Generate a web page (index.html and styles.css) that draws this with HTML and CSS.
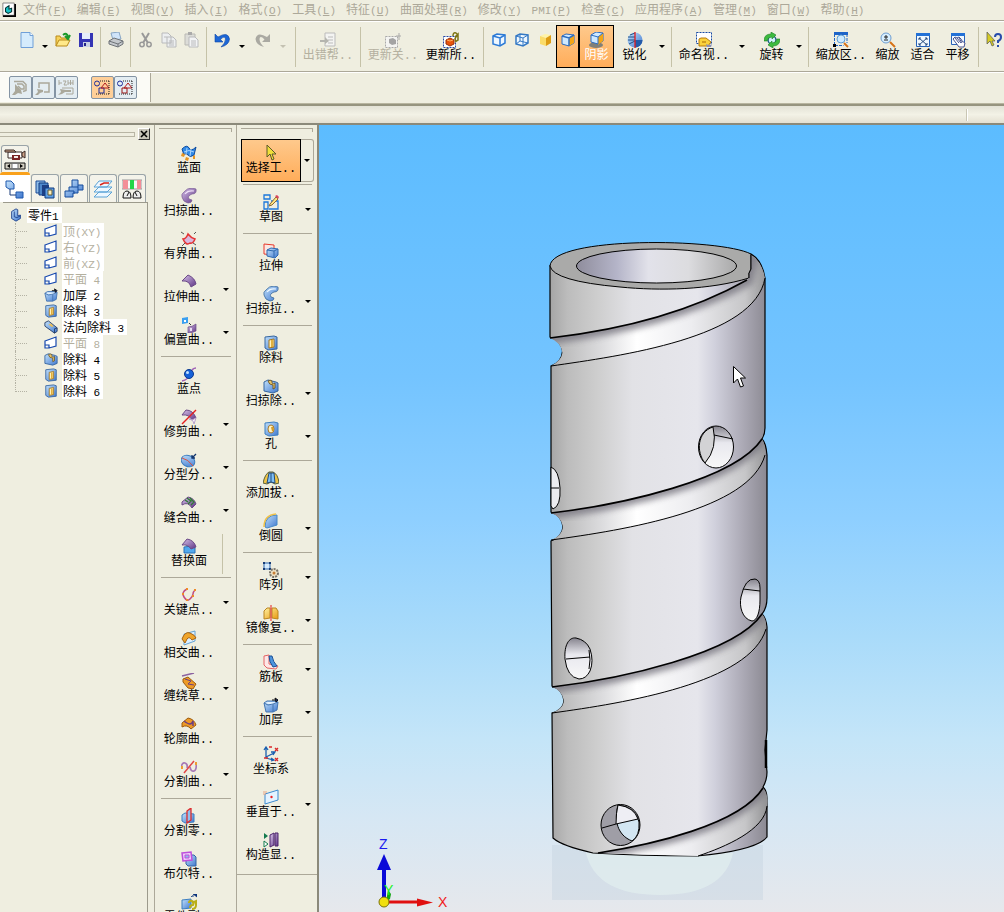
FILE: index.html
```html
<!DOCTYPE html>
<html lang="zh-CN">
<head>
    <meta charset="utf-8">
    <title>零件1</title>
    <link rel="stylesheet" href="styles.css">
</head>
<body>
    <svg class="sprite" aria-hidden="true">
        <defs>
            <linearGradient id="gBlue" x1="0" y1="0" x2="1" y2="1"><stop offset="0" stop-color="#c4e2fb"/><stop offset="1" stop-color="#3f78cf"/></linearGradient>
            <linearGradient id="gPurple" x1="0" y1="0" x2="1" y2="1"><stop offset="0" stop-color="#d9c4ea"/><stop offset="1" stop-color="#5d3384"/></linearGradient>
            <linearGradient id="gGold" x1="0" y1="0" x2="1" y2="1"><stop offset="0" stop-color="#fff0a0"/><stop offset="1" stop-color="#e79a10"/></linearGradient>
        </defs>
        <symbol id="new" viewBox="0 0 16 16"><path d="M2 .5h9l3 3v12H2z" fill="#d5ebfc" stroke="#6f9fd8"/><path d="M11 .5v3h3" fill="#fff" stroke="#6f9fd8"/></symbol>
        <symbol id="open" viewBox="0 0 16 16"><path d="M1 14V4h4l1 2h6v2" fill="#f6d25a" stroke="#b98a1a"/><path d="M1 14l3-6h11l-3 6z" fill="#ffe98a" stroke="#b98a1a"/><path d="M8 3q4-3 5 2M10 4l3 3 2-4" fill="none" stroke="#1a9a2a" stroke-width="2"/></symbol>
        <symbol id="save" viewBox="0 0 16 16"><path d="M1 1h14v14H1z" fill="#3434b4"/><path d="M4 1h8v6H4z" fill="#e6eefa"/><path d="M5 10h7v5H5z" fill="#c8d0e4"/><path d="M6 11h2v3H6z" fill="#22228a"/></symbol>
        <symbol id="print" viewBox="0 0 16 16"><path d="M3 1l8-1 2 7-8 1z" fill="#cfe4fa" stroke="#88a6c4"/><path d="M1 9l5-3 9 3v3l-5 3-9-3z" fill="#c4c8cc" stroke="#6e7378"/><path d="M1 9l9 3 5-3M10 12v3" fill="none" stroke="#6e7378"/></symbol>
        <symbol id="cut" viewBox="0 0 16 16"><path d="M4 1l6 10M11 1L5 11" stroke="#999" stroke-width="2"/><circle cx="4" cy="12.500" r="2.200" fill="none" stroke="#999" stroke-width="1.500"/><circle cx="11" cy="12.500" r="2.200" fill="none" stroke="#999" stroke-width="1.500"/></symbol>
        <symbol id="copy" viewBox="0 0 16 16"><path d="M1 1h6l3 3v7H1zM6 5h6l3 3v7H6z" fill="#eceef0" stroke="#b9babc"/><path d="M8 9h5M8 11h5M8 13h5M3 5h3" stroke="#b9babc"/></symbol>
        <symbol id="paste" viewBox="0 0 16 16"><path d="M1 2h10v11H1z" fill="#dcdcd8" stroke="#b9b9b4"/><path d="M4 0h4v3H4z" fill="#aaa"/><path d="M5 5h6l3 3v7H5z" fill="#f2f3f5" stroke="#b9babc"/><path d="M7 9h5M7 11h5M7 13h5" stroke="#b9babc"/></symbol>
        <symbol id="undo" viewBox="0 0 16 16"><path d="M1 2v8h8L6.500 7.500Q11 3 11.500 7q0 4-4.500 8 8-2 8.500-8Q14-1 4 5z" fill="#1c66d6" stroke="#0d46a5" stroke-width=".6"/></symbol>
        <symbol id="redo" viewBox="0 0 16 16"><path d="M15 2v8H7l2.500-2.500Q5 3 4.500 7q0 4 4.500 8-8-2-8.500-8Q2-1 12 5z" fill="#aaa9a2"/></symbol>
        <symbol id="err" viewBox="0 0 16 16"><path d="M5 1h10v13H5z" fill="#f4f4f2" stroke="#bbb"/><path d="M8 5h5M8 8h5M8 11h5" stroke="#bbb"/><path d="M0 8h5V5l4 4-4 3v-2H0z" fill="#b5b5af"/></symbol>
        <symbol id="upd" viewBox="0 0 16 16"><path d="M.5 4.500h12v11H.5z" fill="#f4f4f2" stroke="#aaa" stroke-dasharray="2 1"/><path d="M4 7l4-1 3 2v4l-4 1-3-2z" fill="#a4a4a4"/><path d="M11 4h5M14 1v7" stroke="#aaa"/></symbol>
        <symbol id="updall" viewBox="0 0 16 16"><path d="M.5 4.500h12v11H.5z" fill="#fff" stroke="#2749a5" stroke-dasharray="2 1"/><path d="M3 8l4-2 4 2v4l-4 2-4-2z" fill="#e8540c" stroke="#97300a"/><path d="M4 8l3 1 3-1" fill="none" stroke="#ffb060"/><path d="M10 4q0-4 3-3 3 2 0 4-2 2 0 4M12 5l3-3v6l-3 2" fill="none" stroke="#7d7413" stroke-width="1.500"/></symbol>
        <symbol id="wire" viewBox="0 0 16 16"><path d="M2 4l4-2 8 1v8l-5 3-7-2z" fill="#eef7ff" stroke="#2c7ad6" stroke-width="1.500"/><path d="M2 4l7 2 5-3M9 6v8" fill="none" stroke="#2c7ad6" stroke-width="1.500"/></symbol>
        <symbol id="hidden" viewBox="0 0 16 16"><path d="M2 4l4-2 8 1v8l-5 3-7-2z" fill="#eef7ff" stroke="#3478c4" stroke-width="1.500"/><path d="M2 4l7 2 5-3M9 6v8M6 2v7l8 2M6 9l-4 3" fill="none" stroke="#3478c4"/></symbol>
        <symbol id="solid" viewBox="0 0 16 16"><path d="M3 4l5-2 6 1-5 3z" fill="#fff3a8"/><path d="M3 4l6 2v8l-6-2z" fill="#fbdc69"/><path d="M9 6l5-3v8l-5 3z" fill="#dd9c13"/></symbol>
        <symbol id="edges" viewBox="0 0 16 16"><path d="M2 4l4-2 8 1v8l-5 3-7-2z" fill="#cfe9ff" stroke="#2c6cc0"/><path d="M9 6l5-3v8l-5 3z" fill="#f3a516"/><path d="M2 4l7 2 5-3M9 6v8" fill="none" stroke="#2c6cc0" stroke-width="1.500"/></symbol>
        <symbol id="shade" viewBox="0 0 16 16"><ellipse cx="7" cy="13" rx="7" ry="3" fill="#80807a"/><path d="M2 3l5-3 7 1v8l-5 3-7-2z" fill="#cfe9ff" stroke="#2c6cc0"/><path d="M9 5l5-4v8l-5 4z" fill="#f3a516"/><path d="M2 3l7 2 5-4M9 5v7" fill="none" stroke="#2c6cc0"/></symbol>
        <symbol id="sharp" viewBox="0 0 16 16"><circle cx="8" cy="8" r="7.500" fill="url(#gBlue)"/><path d="M1 5h7M1 8h7M2 12l6-3M8 1L3 3" stroke="#215085"/><path d="M8 8h7.500A7.500 7.500 0 0 1 8 15.500z" fill="#245baa"/><path d="M8 0v16" stroke="#e61d1d" stroke-width="1.300"/></symbol>
        <symbol id="named" viewBox="0 0 16 16"><path d="M.5.500h15v11H.5z" fill="#fff" stroke="#174aa5" stroke-dasharray="2 1"/><path d="M3 7l2-1h5l5 4-3 4H3z" fill="#fbd23c" stroke="#b87b0c"/><path d="M6 10h4" stroke="#a86804"/><path d="M10 12q4 2 6 0l-1 3h-4z" fill="#8790bc"/></symbol>
        <symbol id="rotate" viewBox="0 0 16 16"><circle cx="8" cy="8" r="4" fill="#d2f0fb" stroke="#1b5c80" stroke-width="1.500"/><path d="M0 9q0-7 7-7V0l5 3-4 4V5Q4 5 3 9zM16 7q0 7-7 7v2l-5-3 4-4v2q4 0 5-4z" fill="#3dba3f" stroke="#1d8222" stroke-width=".6"/></symbol>
        <symbol id="zarea" viewBox="0 0 16 16"><path d="M1.500 2v11.500h9M14 2v9" fill="none" stroke="#1d64c8" stroke-dasharray="3 1"/><path d="M1 0h14v3H1z" fill="#1d64c8"/><circle cx="8" cy="7" r="4" fill="#cdeaff" stroke="#5f9dd4"/><path d="M11 11l4 4" stroke="#d67217" stroke-width="2"/><path d="M0 12h3v3H0z"/></symbol>
        <symbol id="zoom" viewBox="0 0 16 16"><circle cx="6" cy="6" r="5" fill="#d8efff" stroke="#6d9cd0"/><path d="M4 5h4M6 3v4M4 8h4" stroke="#222"/><path d="M10 10l5 5" stroke="#d67217" stroke-width="2"/></symbol>
        <symbol id="fit" viewBox="0 0 16 16"><path d="M1.500 1.500h13v13h-13z" fill="#f0f8ff" stroke="#2762b8"/><path d="M1 1h14v3H1z" fill="#2371d6"/><path d="M4 6l8 7M12 6l-8 7" stroke="#24487d"/><path d="M4 8V6h2M10 6h2v2M12 11v2h-2M6 13H4v-2" fill="none" stroke="#24487d"/></symbol>
        <symbol id="pan" viewBox="0 0 16 16"><path d="M1.500 1.500h13v11h-13z" fill="#f0f8ff" stroke="#2762b8"/><path d="M1 1h14v3H1z" fill="#2371d6"/><path d="M3 7l2-2 2 1 2-1 2 2 1 2 3 2-1 4H9z" fill="#fff" stroke="#465390"/><path d="M5 6l4 5M7 6l4 5M9 6l3 5" stroke="#465390"/></symbol>
        <symbol id="help" viewBox="0 0 16 16"><path d="M1 0v12l3-3 2 5 2-1-2-4h3z" fill="#d6cc25" stroke="#555" stroke-width=".7"/><path d="M9 5q0-3 3-3t3 3-3 4v2M12 13v2" fill="none" stroke="#274cad" stroke-width="2"/></symbol>
        <symbol id="relA" viewBox="0 0 16 16"><path d="M2 1.500h9l3 3v6l-3 1M5 4h5l2 2v3H9L6 6" fill="none" stroke="#aaa89b" stroke-width="1.500"/><path d="M0 15l3-4V4l6 6 1 4-4-1-3 2z" fill="#aaa89b"/></symbol>
        <symbol id="relB" viewBox="0 0 16 16"><path d="M4 8V3h10v9H9" fill="none" stroke="#aaa89b" stroke-width="1.500"/><path d="M0 15l3-3-1-3 6 1v2l-3 1-2 2z" fill="#aaa89b"/></symbol>
        <symbol id="relC" viewBox="0 0 16 16"><path d="M1 0v5M1 3h3M5 1h3L6 5h3M10 0v5M12.500 0v5M15 0v5M10 3h5M4 8h11v6H8" fill="none" stroke="#aaa89b"/><path d="M0 15l3-3-1-3 6 1h5v2H7l-3 2z" fill="#aaa89b"/></symbol>
        <symbol id="snap1" viewBox="0 0 16 16"><circle cx="3" cy="3.500" r="2.500" fill="none" stroke="#1c2d9a"/><path d="M5 8h5v5H5z" fill="none" stroke="#1c2d9a"/><path d="M7 8l4-5 4 5z" fill="none" stroke="#b01c1c"/><path d="M6 1h9M15 1v14M15 14H1" fill="none" stroke="#222" stroke-dasharray="1 1"/></symbol>
        <symbol id="snap2" viewBox="0 0 16 16"><circle cx="3" cy="3.500" r="2.500" fill="none" stroke="#1c2d9a"/><path d="M5 8h5v5H5z" fill="none" stroke="#9a1414"/><path d="M7 8l4-5 4 5z" fill="none" stroke="#b01c1c"/><path d="M6 1h9M15 1v14M15 14H1" fill="none" stroke="#222" stroke-dasharray="1 1"/></symbol>
        <symbol id="camera" viewBox="0 0 22 22"><path d="M4 4h14v6H4z" fill="#fff" stroke="#3a2a26"/><path d="M1 2h9l2 2H1zM18 5l3-2v7l-3-2z" fill="#cfa287" stroke="#3a2a26"/><path d="M8 7h8v5H8z" fill="#7b2424"/><path d="M10 8h4v2h-4z" fill="#f3e9e4"/><path d="M1 15h20v6H1z" fill="#d4d0c4" stroke="#111"/><path d="M3 18l3-2v4zM19 18l-3-2v4z"/><path d="M8 15.500h6v5H8z" fill="#fff" stroke="#777"/></symbol>
        <symbol id="tTree" viewBox="0 0 20 20"><path d="M1 2h5l3 3v5H4L1 8zM11 13h7v6h-7z" fill="url(#gBlue)" stroke="#1e59ad"/><path d="M5 10v6h6" fill="none" stroke="#1a3c7a"/></symbol>
        <symbol id="tLib" viewBox="0 0 20 20"><path d="M1 2h9v12H1z" fill="#8ebce8" stroke="#1a4b96"/><path d="M4 4h9v12H4z" fill="#4e88cc" stroke="#123c80"/><path d="M7 6h7v11H7z" fill="#1d3f85"/><path d="M10 9h9v10h-9z" fill="#5f9fe4" stroke="#123c80"/><path d="M13 11h4v5h-4z" fill="#fff0b8" stroke="#5c5738"/></symbol>
        <symbol id="tFam" viewBox="0 0 20 20"><path d="M8 1h6v5h5v5h-5v3H9v4H1v-6h4V8h3z" fill="url(#gBlue)" stroke="#174c9c"/><path d="M8 8h6M5 12h5v3M14 6v5" fill="none" stroke="#174c9c"/></symbol>
        <symbol id="tLay" viewBox="0 0 20 20"><path d="M1 18l5-5h13l-5 5zM1 13l5-5h13l-5 5zM1 8l5-6h13l-5 6z" fill="#edf7ff" stroke="#5aa2d6"/><path d="M7 6l4-2h5" fill="none" stroke="#d8261c" stroke-width="1.500"/></symbol>
        <symbol id="tSens" viewBox="0 0 20 20"><path d="M0 1h20v9H0z" fill="#f7f7f7" stroke="#999"/><path d="M1 1h5v9H1zM15 1h4v9h-4z" fill="#f38e98"/><path d="M8 1h4v9H8z" fill="#24d548"/><path d="M1 19q0-7 4-7t4 7zM11 19q0-7 4-7t4 7z" fill="#eee" stroke="#111"/><path d="M5 17l2-4M15 17l-2-4" stroke="#111"/></symbol>
        <symbol id="part" viewBox="0 0 14 16"><path d="M2 4l5-3 2 1v7l3-1v4l-5 3-5-3z" fill="url(#gBlue)" stroke="#1c3f8a"/><path d="M5 4v6l3 1 4-2" fill="none" stroke="#1c3f8a"/></symbol>
        <symbol id="plane" viewBox="0 0 14 14"><path d="M1 5l11-4v9l-7 2H1zM5 12v-3H1" fill="#fff" stroke="#1648ae" stroke-width="1.200"/></symbol>
        <symbol id="thick" viewBox="0 0 16 16"><path d="M1 6l3-2h8l3 1-1 8-4 2H3z" fill="url(#gBlue)" stroke="#4374b0"/><path d="M2 6l3-1h7l1 1-4 2z" fill="#e4f2ff"/><path d="M1 6l4 2 5-1 5-2M10 7v8" fill="none" stroke="#4374b0"/><path d="M9 3h4M12 1l3 2-2 2z" stroke="#111" fill="#122b78"/></symbol>
        <symbol id="cutout" viewBox="0 0 16 16"><path d="M2 2l9-1 3 1v12l-9 1-3-2z" fill="url(#gBlue)" stroke="#37669f"/><path d="M6 5l5-1v8l-5 1z" fill="#fff1ba" stroke="#a8781c"/><path d="M9 5v7" stroke="#d69b18" stroke-width="1.500"/></symbol>
        <symbol id="normcut" viewBox="0 0 16 16"><path d="M1 3l4-2 10 8v4l-3 2L1 7z" fill="url(#gBlue)" stroke="#253c62"/><path d="M5 5l3-1 3 3-2 1z" fill="#e9be5a"/><path d="M12 15v-5l3-1" fill="none" stroke="#253c62"/></symbol>
        <symbol id="sweepcut" viewBox="0 0 16 16"><path d="M1 4l4-2 8 2 2 1v8l-5 2-9-2z" fill="url(#gBlue)" stroke="#37669f"/><path d="M5 3q4-2 4 1t3 1v5l-2 1V7q-4 0-5-4z" fill="#e8c668" stroke="#5f471b" stroke-width=".8"/></symbol>
        <symbol id="bsurf" viewBox="0 0 16 16"><path d="M1 4q5-5 7-1t7-1l-2 8q-4 3-6 0t-4 0z" fill="#318be9" stroke="#0e4a9c"/><path d="M6 3L5 9M10 4L9 11M3 7q5-3 10 0" fill="none" stroke="#a8d3fc"/><path d="M1 8l3 1-1 3-3-1zM5 12l3 1-1 3-3-1zM12 11l2-1v4h-2z" fill="#e89520"/></symbol>
        <symbol id="sweep" viewBox="0 0 16 16"><path d="M1 9q1 5 6 6 4 0 4-3l-3-1q-2-3 3-5 5 0 4-5l-4-1q-5 0-8 4-3 2-2 5z" fill="url(#gPurple)" stroke="#785c92" stroke-width=".7"/><path d="M4 6q3-4 9-3" fill="none" stroke="#f0e2f8" stroke-width="1.200"/></symbol>
        <symbol id="bound" viewBox="0 0 16 16"><path d="M2 8q3 0 5-5 3 4 7 5-2 5-5 4-4 3-7-4z" fill="#d9b8de" stroke="#e43232" stroke-width="1.500"/><path d="M0 1l3 2M13 3l2-2M1 15l3-3M12 12l3 2" stroke="#555"/></symbol>
        <symbol id="extsurf" viewBox="0 0 16 16"><path d="M1 7l6-6q7 3 8 9l-5 3q-2-7-9-6z" fill="url(#gPurple)" stroke="#6b4a87"/></symbol>
        <symbol id="offset" viewBox="0 0 16 16"><path d="M1 1l6-1v6l-6 1z" fill="#3a9ff0"/><path d="M3 3h2v2H3z" fill="#fff"/><path d="M8 6l2 2" stroke="#333"/><path d="M7 10q4 0 8-3v7q-4 2-8 2z" fill="url(#gPurple)" stroke="#6b4a87" stroke-width=".7"/><path d="M9 11h2v3H9z" fill="#e9dcf3"/></symbol>
        <symbol id="bpoint" viewBox="0 0 16 16"><path d="M1 15q6-1 8-7t6-6" fill="none" stroke="#a163b5" stroke-width="1.300"/><circle cx="8" cy="8" r="4.500" fill="#1661d8" stroke="#0a398e"/><circle cx="6.500" cy="6.500" r="1.500" fill="#c0e0ff"/></symbol>
        <symbol id="trim" viewBox="0 0 16 16"><path d="M1 6l4-5q7 0 10 8l-4 2Q8 5 1 6z" fill="url(#gPurple)" stroke="#6b4a87"/><path d="M8 10l3 1 4-2-2 6q-1-5-5-5z" fill="#f8f0fc" stroke="#b9a2cb"/><path d="M1 15L15 1" stroke="#e52020" stroke-width="1.500"/></symbol>
        <symbol id="partline" viewBox="0 0 16 16"><ellipse cx="7" cy="9" rx="7" ry="5.500" fill="url(#gBlue)" stroke="#3d7fc0" transform="rotate(25 7 9)"/><path d="M1 6q6 1 11 8" fill="none" stroke="#d95040"/><path d="M11 6l4-4M11 3v3h3" fill="none" stroke="#12356e" stroke-width="1.300"/></symbol>
        <symbol id="stitch" viewBox="0 0 16 16"><path d="M1 7l6-5q6 1 8 7l-4 4q-4-7-10-3z" fill="url(#gPurple)" stroke="#6b4a87"/><path d="M4 5l3 2M6 3l4 3-3 3M9 3l4 4-3 3" fill="none" stroke="#2f7b34" stroke-width="1.300"/></symbol>
        <symbol id="replace" viewBox="0 0 16 16"><path d="M3 9l8-1 3 2v5H3z" fill="#51a9ee" stroke="#2b70b6"/><path d="M1 7l5-6q7 1 9 8l-5 2q-3-5-9-4z" fill="url(#gPurple)" stroke="#6b4a87"/></symbol>
        <symbol id="keypt" viewBox="0 0 16 16"><path d="M6 2Q0 5 3 10t6 2 3-5 2-4" fill="none" stroke="#c04d82" stroke-width="1.500"/><path d="M5 1h2v2H5zM1 6h2v2H1zM5 12h2v2H5zM11 8h2v2h-2zM13 2h2v2h-2z" fill="#ef8a27"/></symbol>
        <symbol id="cross" viewBox="0 0 16 16"><path d="M3 4l11-3v10L3 15z" fill="#dcefff" stroke="#67a2d2"/><path d="M1 9q3-8 8-6t6 5l-4 2q-3-4-5-1l-2 4z" fill="#efa52c" stroke="#a76210"/></symbol>
        <symbol id="wrap" viewBox="0 0 16 16"><path d="M1 3L13 0" fill="none" stroke="#8b62a1" stroke-width="1.500"/><path d="M2 6l5-2 8 7-3 5-5-1-5-6z" fill="#ee9a26" stroke="#9c5c0e"/><path d="M4 6l6 2-3 3 6 1" fill="none" stroke="#6d3f80"/></symbol>
        <symbol id="contour" viewBox="0 0 16 16"><path d="M1 7l6-5q6 1 8 7l-5 4q-4-5-9-2z" fill="#ee9a26" stroke="#9c5c0e"/><path d="M3 5q4 3 6 3t3-3v5" fill="none" stroke="#6d3f80" stroke-width="1.500"/></symbol>
        <symbol id="split" viewBox="0 0 16 16"><path d="M0 9q1-6 4-5t2 5M9 8q1 5 4 4t2-9" fill="none" stroke="#a779b5" stroke-width="1.700"/><path d="M3 14L13 2" stroke="#e14545" stroke-width="1.500"/><path d="M0 7h2v3H0zM14 3h2v3h-2z" fill="#ed9d32"/></symbol>
        <symbol id="divide" viewBox="0 0 16 16"><path d="M1 7l3-2 9 1v8l-9 1-3-2z" fill="url(#gBlue)" stroke="#3d7fc0"/><path d="M6 3l4-3v12l-4 3z" fill="#8fbfee" stroke="#df2b2b" stroke-width="1.300"/></symbol>
        <symbol id="bool" viewBox="0 0 16 16"><path d="M5 4h8l2 2v9H7l-2-2z" fill="url(#gBlue)" stroke="#3464a5"/><path d="M1 2l9-1 1 8-9 1z" fill="#efc9fa" stroke="#bd4fdb" stroke-width="1.500"/><path d="M4 4h4v3H4z" fill="#8ebbe9" stroke="#bd4fdb"/></symbol>
        <symbol id="pcopy" viewBox="0 0 16 16"><path d="M1 6l9-1v9l-9 1z" fill="url(#gBlue)" stroke="#3d7fc0"/><path d="M10 3q1-2 3-1M12 0h4v3z" fill="#0d347b" stroke="#0d347b" stroke-width=".7"/><path d="M8 9q0-3 3-2t1 4q-3 0-3 3M11 9l4-2v4q0 4-4 4" fill="none" stroke="#b9ae18" stroke-width="2"/></symbol>
        <symbol id="select" viewBox="0 0 16 16"><path d="M4 0v12l3-3 2 6 2-1-2-5h4z" fill="#f0df39" stroke="#5c5a2a"/></symbol>
        <symbol id="sketch" viewBox="0 0 16 16"><path d="M1 1h6v4H1zM1 8h4v7H1zM8 7h7v8H6" fill="none" stroke="#1c78da" stroke-width="1.300"/><path d="M7 10l6-7 2 2-6 6-3 1z" fill="#ffe580" stroke="#8a6b36"/><path d="M12 2l2-1 2 2-1 2z" fill="#db455c"/></symbol>
        <symbol id="extrude" viewBox="0 0 16 16"><path d="M1 1l10 1v10L1 11z" fill="#fbe7e2" stroke="#e8392b"/><path d="M4 7l4-2 7 1v6l-3 3-8-2z" fill="url(#gBlue)" stroke="#2e69b0"/><path d="M4 7l7 1 4-2M11 8v6" fill="none" stroke="#2e69b0"/></symbol>
        <symbol id="sweepb" viewBox="0 0 16 16"><path d="M1 9q1 5 6 6 4 0 4-3l-3-1q-2-3 3-5 5 0 4-5l-4-1q-5 0-8 4-3 2-2 5z" fill="url(#gBlue)" stroke="#3b6a9a" stroke-width=".8"/><path d="M4 6q3-4 9-3" fill="none" stroke="#eef8ff" stroke-width="1.200"/></symbol>
        <symbol id="hole" viewBox="0 0 16 16"><path d="M2 2l9-1 4 1v12l-9 1-4-2z" fill="url(#gBlue)" stroke="#3d7fc0"/><ellipse cx="8" cy="8" rx="3" ry="4" fill="#fff2c2" stroke="#a87a2a"/><path d="M9 6l1 4" stroke="#d79b20" stroke-width="2"/></symbol>
        <symbol id="draft" viewBox="0 0 16 16"><path d="M0 13q2-9 6-11h4q5 2 6 11l-4 1-4-2-4 2z" fill="#f0c445" stroke="#555f3c"/><path d="M4 13l2-10h5l1 10-4-1z" fill="#7fc0f4" stroke="#20497c"/><path d="M8 3v9" stroke="#20497c"/></symbol>
        <symbol id="round" viewBox="0 0 16 16"><path d="M2 14Q2 2 14 2v10l-10 3z" fill="url(#gBlue)" stroke="#4788c8"/><path d="M1 14Q1 2 13 1" fill="none" stroke="#eec04a" stroke-width="1.500"/></symbol>
        <symbol id="pattern" viewBox="0 0 16 16"><path d="M1 1h6v6H1z" fill="#d7ecfd" stroke="#2c66ad"/><path d="M0 0h2v2H0zM6 0h2v2H6zM0 6h2v2H0zM6 6h2v2H6z" fill="#173c75"/><circle cx="11" cy="11" r="4" fill="#eee2c5" stroke="#77736a" stroke-dasharray="2 1" stroke-width="2"/><circle cx="11" cy="11" r="1.500" fill="#c57d36"/></symbol>
        <symbol id="mirror" viewBox="0 0 16 16"><path d="M1 6l3-3h3v10l-6 1zM9 3h4l2 3v8l-6-1z" fill="url(#gGold)" stroke="#bb8420"/><path d="M8 0v16" stroke="#e52020"/></symbol>
        <symbol id="rib" viewBox="0 0 16 16"><path d="M1 2l5-1v9l9 2-2 3-9-1-3-3z" fill="#fde7e7" stroke="#e46464"/><path d="M6 2h3q1 6 5 10l-4 1q-4-5-4-11z" fill="#4d94de" stroke="#1b5096"/></symbol>
        <symbol id="csys" viewBox="0 0 16 16"><path d="M3 12V2M1 4l2-3 2 3M3 11l8-4M8 6l4 0-2 3M3 12l7 2M8 12l3 2-3 1" fill="none" stroke="#1a5faf" stroke-width="1.300"/><path d="M6 1h3M12 2l3 3M15 2l-3 3M12 12l3 3M15 12l-3 3M1 12h4" stroke="#d9292b" stroke-width="1.300"/></symbol>
        <symbol id="normal" viewBox="0 0 16 16"><path d="M2 5l13-4v10L2 15z" fill="#e4f3ff" stroke="#3d8bd0"/><circle cx="8.500" cy="8" r="1.200" fill="#e22"/><path d="M0 3h4M0 5h3" stroke="#e9a482"/></symbol>
        <symbol id="constr" viewBox="0 0 16 16"><path d="M1 1l4 3-4 3z" fill="#137a4e"/><path d="M1 9l4 3-4 3z" fill="#fff" stroke="#137a4e"/><path d="M7 3l4-2v12l-4 2zM12 1h3v13h-3z" fill="url(#gPurple)" stroke="#4d256c"/></symbol>
    </svg>

    <nav class="menubar">
        <svg class="app-icon" viewBox="0 0 16 16"><path d="M1 0h13v14H1z" fill="#fff" stroke="#777"/><path d="M1 15h14V1" fill="none" stroke="#000" stroke-width="2"/><path d="M5 5l3-2v4l3-1v4l-4 2-3-2V6z" fill="#19c2c5" stroke="#033" stroke-width="1.200"/></svg>
        <button>文件<small>(<u>F</u>)</small></button>
        <button>编辑<small>(<u>E</u>)</small></button>
        <button>视图<small>(<u>V</u>)</small></button>
        <button>插入<small>(<u>I</u>)</small></button>
        <button>格式<small>(<u>O</u>)</small></button>
        <button>工具<small>(<u>L</u>)</small></button>
        <button>特征<small>(<u>U</u>)</small></button>
        <button>曲面处理<small>(<u>R</u>)</small></button>
        <button>修改<small>(<u>Y</u>)</small></button>
        <button><small>PMI(<u>P</u>)</small></button>
        <button>检查<small>(<u>C</u>)</small></button>
        <button>应用程序<small>(<u>A</u>)</small></button>
        <button>管理<small>(<u>M</u>)</small></button>
        <button>窗口<small>(<u>W</u>)</small></button>
        <button>帮助<small>(<u>H</u>)</small></button>
    </nav>

    <div class="toolbar">
        <button class="tool icon" aria-label="新建"><svg><use href="#new"/></svg></button><button class="drop" aria-label="更多"></button>
        <button class="tool icon" aria-label="打开"><svg><use href="#open"/></svg></button>
        <button class="tool icon" aria-label="保存"><svg><use href="#save"/></svg></button>
        <i class="vsep"></i>
        <button class="tool icon" aria-label="打印"><svg><use href="#print"/></svg></button>
        <i class="vsep"></i>
        <button class="tool icon" aria-label="剪切"><svg><use href="#cut"/></svg></button>
        <button class="tool icon" aria-label="复制"><svg><use href="#copy"/></svg></button>
        <button class="tool icon" aria-label="粘贴"><svg><use href="#paste"/></svg></button>
        <i class="vsep"></i>
        <button class="tool icon" aria-label="撤消"><svg><use href="#undo"/></svg></button><button class="drop far" aria-label="更多"></button>
        <button class="tool icon" aria-label="重做"><svg><use href="#redo"/></svg></button><button class="drop far off" aria-label="更多"></button>
        <i class="vsep"></i>
        <button class="tool wide off"><svg><use href="#err"/></svg>出错帮..</button>
        <i class="vsep"></i>
        <button class="tool wide off"><svg><use href="#upd"/></svg>更新关..</button>
        <button class="tool wide"><svg><use href="#updall"/></svg>更新所..</button>
        <i class="vsep"></i>
        <button class="tool icon" aria-label="线框"><svg><use href="#wire"/></svg></button>
        <button class="tool icon" aria-label="隐藏边"><svg><use href="#hidden"/></svg></button>
        <button class="tool icon" aria-label="着色"><svg><use href="#solid"/></svg></button>
        <button class="tool icon on" aria-label="带边着色"><svg><use href="#edges"/></svg></button>
        <button class="tool short on"><svg><use href="#shade"/></svg>阴影</button>
        <button class="tool mid"><svg><use href="#sharp"/></svg>锐化</button><button class="drop" aria-label="更多"></button>
        <i class="vsep"></i>
        <button class="tool wide"><svg><use href="#named"/></svg>命名视..</button><button class="drop far" aria-label="更多"></button>
        <button class="tool mid"><svg><use href="#rotate"/></svg>旋转</button><button class="drop" aria-label="更多"></button>
        <i class="vsep"></i>
        <button class="tool wide"><svg><use href="#zarea"/></svg>缩放区..</button>
        <button class="tool short"><svg><use href="#zoom"/></svg>缩放</button>
        <button class="tool short"><svg><use href="#fit"/></svg>适合</button>
        <button class="tool short"><svg><use href="#pan"/></svg>平移</button>
        <i class="vsep"></i>
        <button class="tool icon" aria-label="帮助"><svg><use href="#help"/></svg></button>
    </div>

    <div class="subbar">
        <div class="snaps">
            <button aria-label="关系"><svg><use href="#relA"/></svg></button>
            <button aria-label="矩形"><svg><use href="#relB"/></svg></button>
            <button aria-label="尺寸"><svg><use href="#relC"/></svg></button>
            <button class="on gap" aria-label="捕捉1"><svg><use href="#snap1"/></svg></button>
            <button aria-label="捕捉2"><svg><use href="#snap2"/></svg></button>
        </div>
    </div>
    <div class="ribbon"><i></i></div>

    <main>
        <aside class="pathfinder">
            <div class="grip"><i></i><button class="close" aria-label="关闭"><svg viewBox="0 0 8 8"><path d="M1 1l6 6M7 1L1 7" stroke="#000" stroke-width="1.600"/></svg></button></div>
            <button class="tab cam" aria-label="播放"><svg><use href="#camera"/></svg></button>
            <div class="tabs">
                <button class="tab on" aria-label="路径查找器"><svg><use href="#tTree"/></svg></button>
                <button class="tab" aria-label="特征库"><svg><use href="#tLib"/></svg></button>
                <button class="tab" aria-label="零件族"><svg><use href="#tFam"/></svg></button>
                <button class="tab" aria-label="图层"><svg><use href="#tLay"/></svg></button>
                <button class="tab" aria-label="传感器"><svg><use href="#tSens"/></svg></button>
            </div>
            <div class="tree">
                <div class="root"><svg><use href="#part"/></svg><span>零件<small>1</small></span></div>
                <ul>
                    <li class="off"><svg><use href="#plane"/></svg><span>顶<small>(XY)</small></span></li>
                    <li class="off"><svg><use href="#plane"/></svg><span>右<small>(YZ)</small></span></li>
                    <li class="off"><svg><use href="#plane"/></svg><span>前<small>(XZ)</small></span></li>
                    <li class="off"><svg><use href="#plane"/></svg><span>平面<small> 4</small></span></li>
                    <li><svg><use href="#thick"/></svg><span>加厚<small> 2</small></span></li>
                    <li><svg><use href="#cutout"/></svg><span>除料<small> 3</small></span></li>
                    <li><svg><use href="#normcut"/></svg><span>法向除料<small> 3</small></span></li>
                    <li class="off"><svg><use href="#plane"/></svg><span>平面<small> 8</small></span></li>
                    <li><svg><use href="#sweepcut"/></svg><span>除料<small> 4</small></span></li>
                    <li><svg><use href="#cutout"/></svg><span>除料<small> 5</small></span></li>
                    <li><svg><use href="#cutout"/></svg><span>除料<small> 6</small></span></li>
                </ul>
            </div>
        </aside>

        <div class="palette surfaces">
            <div class="row"><button class="tool wide"><svg><use href="#bsurf"/></svg>蓝面</button></div>
            <div class="row"><button class="tool wide"><svg><use href="#sweep"/></svg>扫掠曲..</button></div>
            <div class="row"><button class="tool wide"><svg><use href="#bound"/></svg>有界曲..</button></div>
            <div class="row"><button class="tool wide"><svg><use href="#extsurf"/></svg>拉伸曲..</button><button class="drop" aria-label="更多"></button></div>
            <div class="row"><button class="tool wide"><svg><use href="#offset"/></svg>偏置曲..</button><button class="drop" aria-label="更多"></button></div>
            <hr>
            <div class="row"><button class="tool wide"><svg><use href="#bpoint"/></svg>蓝点</button></div>
            <div class="row"><button class="tool wide"><svg><use href="#trim"/></svg>修剪曲..</button><button class="drop" aria-label="更多"></button></div>
            <div class="row"><button class="tool wide"><svg><use href="#partline"/></svg>分型分..</button><button class="drop" aria-label="更多"></button></div>
            <div class="row"><button class="tool wide"><svg><use href="#stitch"/></svg>缝合曲..</button><button class="drop" aria-label="更多"></button></div>
            <div class="row"><button class="tool wide"><svg><use href="#replace"/></svg>替换面</button><i class="vsep"></i></div>
            <hr>
            <div class="row"><button class="tool wide"><svg><use href="#keypt"/></svg>关键点..</button><button class="drop" aria-label="更多"></button></div>
            <div class="row"><button class="tool wide"><svg><use href="#cross"/></svg>相交曲..</button></div>
            <div class="row"><button class="tool wide"><svg><use href="#wrap"/></svg>缠绕草..</button><button class="drop" aria-label="更多"></button></div>
            <div class="row"><button class="tool wide"><svg><use href="#contour"/></svg>轮廓曲..</button></div>
            <div class="row"><button class="tool wide"><svg><use href="#split"/></svg>分割曲..</button><button class="drop" aria-label="更多"></button></div>
            <hr>
            <div class="row"><button class="tool wide"><svg><use href="#divide"/></svg>分割零..</button></div>
            <div class="row"><button class="tool wide"><svg><use href="#bool"/></svg>布尔特..</button></div>
            <div class="row"><button class="tool wide"><svg><use href="#pcopy"/></svg>零件副..</button></div>
        </div>

        <div class="features">
            <div class="palette">
                <div class="row"><button class="tool wide on"><svg><use href="#select"/></svg>选择工..</button><button class="drop framed" aria-label="更多"></button></div>
                <hr>
                <div class="row"><button class="tool wide"><svg><use href="#sketch"/></svg>草图</button><button class="drop" aria-label="更多"></button></div>
                <hr>
                <div class="row"><button class="tool wide"><svg><use href="#extrude"/></svg>拉伸</button></div>
                <div class="row"><button class="tool wide"><svg><use href="#sweepb"/></svg>扫掠拉..</button><button class="drop" aria-label="更多"></button></div>
                <hr>
                <div class="row"><button class="tool wide"><svg><use href="#cutout"/></svg>除料</button></div>
                <div class="row"><button class="tool wide"><svg><use href="#sweepcut"/></svg>扫掠除..</button><button class="drop" aria-label="更多"></button></div>
                <div class="row"><button class="tool wide"><svg><use href="#hole"/></svg>孔</button><button class="drop" aria-label="更多"></button></div>
                <hr>
                <div class="row"><button class="tool wide"><svg><use href="#draft"/></svg>添加拔..</button></div>
                <div class="row"><button class="tool wide"><svg><use href="#round"/></svg>倒圆</button><button class="drop" aria-label="更多"></button></div>
                <hr>
                <div class="row"><button class="tool wide"><svg><use href="#pattern"/></svg>阵列</button><button class="drop" aria-label="更多"></button></div>
                <div class="row"><button class="tool wide"><svg><use href="#mirror"/></svg>镜像复..</button><button class="drop" aria-label="更多"></button></div>
                <hr>
                <div class="row"><button class="tool wide"><svg><use href="#rib"/></svg>筋板</button><button class="drop" aria-label="更多"></button></div>
                <div class="row"><button class="tool wide"><svg><use href="#thick"/></svg>加厚</button><button class="drop" aria-label="更多"></button></div>
                <hr>
                <div class="row"><button class="tool wide"><svg><use href="#csys"/></svg>坐标系</button></div>
                <div class="row"><button class="tool wide"><svg><use href="#normal"/></svg>垂直于..</button><button class="drop" aria-label="更多"></button></div>
                <div class="row"><button class="tool wide"><svg><use href="#constr"/></svg>构造显..</button></div>
            </div>
        </div>

        <section class="viewport">
            <svg viewBox="319 125 685 787" preserveAspectRatio="xMinYMin slice">
                <defs>
                    <linearGradient id="body" gradientUnits="userSpaceOnUse" x1="550" y1="0" x2="767" y2="0">
                        <stop offset="0" stop-color="#a5a5a5"/><stop offset=".08" stop-color="#bcbcbc"/><stop offset=".22" stop-color="#cecece"/><stop offset=".38" stop-color="#e2e2e6"/><stop offset=".68" stop-color="#e6e6ec"/><stop offset=".76" stop-color="#d0d0dc"/><stop offset=".88" stop-color="#aeacb8"/><stop offset="1" stop-color="#8b8992"/>
                    </linearGradient>
                    <linearGradient id="bore" x1="0" y1="0" x2="1" y2="0">
                        <stop offset="0" stop-color="#8f8d9c"/><stop offset=".25" stop-color="#b4b4c8"/><stop offset=".45" stop-color="#e2e2ea"/><stop offset=".7" stop-color="#dcdcdf"/><stop offset="1" stop-color="#a9a9a9"/>
                    </linearGradient>
                    <linearGradient id="groove" gradientUnits="userSpaceOnUse" x1="550" y1="0" x2="767" y2="0">
                        <stop offset="0" stop-color="#b0b0b0"/><stop offset=".25" stop-color="#dedee0"/><stop offset=".4" stop-color="#ffffff"/><stop offset=".65" stop-color="#ededf0"/><stop offset=".9" stop-color="#c6c6c8"/><stop offset="1" stop-color="#929294"/>
                    </linearGradient>
                    <linearGradient id="inside" x1="0" y1="0" x2="0" y2="1">
                        <stop offset="0" stop-color="#85838d"/><stop offset=".4" stop-color="#e8e8ee"/><stop offset="1" stop-color="#f8f8f8"/>
                    </linearGradient>
                    <filter id="soft"><feGaussianBlur stdDeviation="3"/></filter>
                    <clipPath id="c1"><path d="M550 338C620 330 690 312 747 280L749 278Q748 274 751 269V255Q762 262 765 278C755 338 620 356 551 366Q561 361 562.500 353Q561 342 550 338z"/></clipPath>
                    <clipPath id="c2"><path d="M551 513C620 505 735 480 762 439Q766 446 765 455C750 510 625 530 551 540Q562 536 563 527Q561 516 551 513z"/></clipPath>
                    <clipPath id="c3"><path d="M552 687C620 679 735 654 762 614Q767 620 766 629C750 683 625 703 552 713Q563 709 564 701Q562 690 552 687z"/></clipPath>
                    <clipPath id="c4"><path d="M598 853C650 845 740 825 763 788Q769 795 767 806C765 830 725 847 698 856z"/></clipPath>
                </defs>

                <path d="M552 845H763V900H552z" fill="#c3d2de" opacity=".4"/>
                <path d="M586 853H733Q724 895 660 895T586 853z" fill="#e4f2f0" opacity=".6"/>

                <path d="M550 266V337Q561 341 562.500 351Q562 362 551 366L551 512Q562 516 563 527Q562 537 551 541L552 686Q563 690 564 701Q563 710 552 713L553 838Q562 846 593 853Q640 856 697 856Q757 850 767 837V798Q767 791 763 787Q767 780 767 772L765 750L767 730V627Q766 618 762 614Q767 608 767 598V455Q766 443 762 439Q765 434 765 428V278Q762 260 751 254L740 272H560z" fill="url(#body)" stroke="#000" stroke-width="1.200"/>
                <path d="M550 266C552 236 720 238 751 254V269Q748 273 749 278C710 290 660 291 620 287Q553 281 550 266z" fill="#aaaaa9" stroke="#000"/>
                <ellipse cx="656.500" cy="266" rx="80" ry="17" fill="url(#bore)" stroke="#000"/>

                <g clip-path="url(#c1)"><path d="M540 240h240v140H540z" fill="url(#groove)"/><path d="M548 338C620 330 690 312 747 280L754 252" fill="none" stroke="#77757f" stroke-width="12" filter="url(#soft)" opacity=".8"/></g>
                <g clip-path="url(#c2)"><path d="M540 430h240v120H540z" fill="url(#groove)"/><path d="M548 513C620 505 735 480 762 437" fill="none" stroke="#77757f" stroke-width="12" filter="url(#soft)" opacity=".8"/></g>
                <g clip-path="url(#c3)"><path d="M540 600h240v120H540z" fill="url(#groove)"/><path d="M548 687C620 679 735 654 762 612" fill="none" stroke="#77757f" stroke-width="12" filter="url(#soft)" opacity=".8"/></g>
                <g clip-path="url(#c4)"><path d="M540 780h240v90H540z" fill="url(#groove)"/><path d="M590 853C650 845 740 825 763 786" fill="none" stroke="#77757f" stroke-width="12" filter="url(#soft)" opacity=".8"/></g>

                <g fill="none" stroke="#000">
                    <path d="M550 338C620 330 690 312 747 280M551 513C620 505 735 480 762 439M552 687C620 679 735 654 762 614M598 853C650 845 740 825 763 788" stroke-width="1.600"/>
                    <path d="M551 366C620 356 755 338 765 278M551 540C625 530 750 510 765 455M552 713C625 703 750 683 766 629M698 856C725 847 765 830 767 806"/>
                    <path d="M751 255V269Q748 273 749 278"/>
                    <path d="M766 740L766 768" stroke-width="2.500"/>
                </g>

                <g stroke="#000">
                    <ellipse cx="716" cy="447" rx="17.500" ry="21" fill="url(#inside)"/>
                    <path d="M713 427Q718 448 705 463C696 452 697 432 713 427z" fill="#d3d3d5"/>
                    <path d="M714 435L733 439" fill="none"/>
                    <path d="M551 467Q559 470 560 488T553 509L551 506z" fill="#ececf0"/>
                    <path d="M551 488h8"/>
                    <path d="M760 588V600C760 612 757 621 752 621C742 619 739 606 741 597Q745 578 755 579Q760 580 760 588z" fill="url(#inside)"/>
                    <path d="M743 589L760 591"/>
                    <path d="M565 659C564 645 569 637 576 638Q586 640 590 649Q594 661 590 671Q586 679 579 679Q567 677 565 659z" fill="url(#inside)"/>
                    <path d="M566 659L590 657M589 650Q591 660 589 669" fill="none"/>
                    <ellipse cx="620.500" cy="825" rx="19.500" ry="20.500" fill="#9f9ea6"/>
                    <path d="M618 805C614 820 617 835 632 841Q640 836 639 822Q636 807 618 805z" fill="#d3e6f2"/>
                    <path d="M618 805Q616 813 616 824L638 819Q634 807 618 805z" fill="#eeeef4"/>
                    <path d="M602 828L616 824" fill="none"/>
                </g>

                <path d="M733.500 366.500V383l4-4 3 8 3-1-3-8h5z" fill="#fff" stroke="#000"/>

                <path d="M384 902V868" stroke="#0a0ad8" stroke-width="4"/>
                <path d="M384 854l7 16h-14z" fill="#0a0ad8"/>
                <path d="M388 902h32" stroke="#e01010" stroke-width="3"/>
                <path d="M433 902.500l-16 4v-8z" fill="#e01010"/>
                <path d="M386 902l2-12 3 4-1 5z" fill="#12a512"/>
                <circle cx="384" cy="902" r="5" fill="#f0e010" stroke="#7c7408"/>
                <g class="axes">
                    <text x="379" y="849" fill="#1a1af0">Z</text>
                    <text x="384" y="895" fill="#1ff01f">Y</text>
                    <text x="438" y="907" fill="#f01a1a">X</text>
                </g>
            </svg>
        </section>
    </main>
</body>
</html>
```
FILE: styles.css
```css
* {
    margin: 0;
    padding: 0;
    box-sizing: border-box;
}
body {
    height: 100vh;
    display: flex;
    flex-direction: column;
    overflow: hidden;
    background: #efeee0;
    color: #000;
    font: 12px/14px "Noto Sans CJK SC", sans-serif;
}
button {
    font: inherit;
    color: inherit;
    background: none;
    border: none;
}
small {
    font-family: "Liberation Mono", monospace;
    font-size: 11px;
    white-space: pre;
}
.sprite {
    position: absolute;
    width: 0;
    height: 0;
}

/* menu */
.menubar {
    height: 21px;
    flex: none;
    display: flex;
    align-items: center;
    gap: 10px;
    padding-left: 2px;
    overflow: hidden;
    color: #aca899;
    border-bottom: 1px solid #aca899;
}
.menubar button {
    white-space: nowrap;
}
.app-icon {
    width: 14px;
    height: 16px;
    margin-right: -3px;
    flex: none;
}

/* tool buttons */
.toolbar {
    height: 51px;
    flex: none;
    display: flex;
    align-items: flex-start;
    padding: 3px 0 0 15px;
    overflow: hidden;
    border-top: 1px solid #fff;
    border-bottom: 1px solid #aca899;
}
.tool {
    height: 43px;
    flex: none;
    display: flex;
    flex-direction: column;
    align-items: center;
    gap: 1px;
    padding-top: 7px;
    white-space: nowrap;
    font-family: "Liberation Mono", "Noto Sans CJK SC", monospace;
}
.tool svg {
    width: 16px;
    height: 16px;
    flex: none;
}
.icon {
    width: 23px;
}
.short {
    width: 35px;
}
.mid {
    width: 41px;
}
.wide {
    width: 58px;
}
.tool.on {
    padding-top: 6px;
    border: 1px solid #000;
    background: linear-gradient(#fec98c, #ffad5a);
}
.toolbar .short.on {
    color: #fff;
}
.off {
    color: #b4b09f;
}
.drop {
    width: 13px;
    height: 43px;
    flex: none;
}
.drop::before {
    content: "";
    display: block;
    width: 0;
    margin: 0 auto;
    border: 3px solid transparent;
    border-top-color: #000;
    border-bottom: none;
}
.drop.off::before {
    border-top-color: #c4c1b2;
}
.far {
    width: 18px;
}
.framed {
    border: 1px solid #aca899;
    border-left: none;
    border-radius: 0 3px 3px 0;
}
.vsep {
    width: 1px;
    height: 40px;
    margin: 2px 3px;
    flex: none;
    background: #c5c2a8;
}

/* snap bar */
.subbar {
    height: 32px;
    flex: none;
    border-top: 1px solid #fff;
    border-bottom: 1px solid #b8b5a0;
}
.snaps {
    width: 151px;
    height: 29px;
    display: flex;
    padding: 3px 0 0 9px;
    background: #fbfbf6;
    border-right: 1px solid #aca899;
}
.snaps button {
    width: 23px;
    height: 23px;
    padding: 2px;
    border: 1px solid #8494a4;
    border-radius: 2px;
    background: #e4edf2;
}
.snaps svg {
    display: block;
    width: 16px;
    height: 16px;
}
.snaps .on {
    background: #ffcf98;
}
.snaps .gap {
    margin-left: 13px;
}
.ribbon {
    height: 21px;
    flex: none;
    display: flex;
    justify-content: flex-end;
    padding: 3px 36px 2px;
    border-top: 2px solid #96947f;
    border-bottom: 2px solid #8b897a;
    background: linear-gradient(#e3e2d6, #f3f2e6 50%, #e4e0d2);
}
.ribbon i {
    width: 2px;
    background: #c9c6b4;
    border-right: 1px solid #fff;
}

main {
    flex: 1;
    min-height: 0;
    display: flex;
}

/* left panel */
.pathfinder {
    width: 155px;
    flex: none;
    display: flex;
    flex-direction: column;
    border-right: 1px solid #aca899;
}
.grip {
    display: flex;
    align-items: center;
    gap: 3px;
    padding: 3px 4px 0 0;
}
.grip i {
    flex: 1;
    height: 5px;
    border: 1px solid #b8b5a4;
    border-left: none;
}
.close {
    width: 12px;
    height: 12px;
    background: #c6c3b8;
    border: 1px solid #fff;
    border-right-color: #333;
    border-bottom-color: #333;
}
.close svg {
    display: block;
    width: 8px;
    height: 8px;
    margin: 1px;
}
.tab {
    width: 28px;
    height: 28px;
    display: flex;
    align-items: center;
    justify-content: center;
    border: 1px solid #9aa4a8;
    border-bottom: none;
    border-radius: 3px 3px 0 0;
    background: #f4f3ea;
}
.tab svg {
    width: 20px;
    height: 20px;
}
.cam {
    height: 27px;
    margin: 5px 0 0 1px;
}
.cam svg {
    width: 22px;
    height: 22px;
}
.tabs {
    display: flex;
    align-items: flex-end;
    gap: 1px;
}
.tabs .on {
    width: 30px;
    height: 30px;
    border: none;
    border-top: 3px solid #f9a11b;
    background: #fff;
}
.tree {
    flex: 1;
    width: 145px;
    margin-left: 3px;
    padding: 4px 0 0 6px;
    border-top: 1px solid #9c9a8c;
    border-right: 1px solid #9c9a8c;
}
.root,
.tree li {
    display: flex;
    align-items: center;
    height: 16px;
    white-space: nowrap;
}
.tree svg {
    width: 14px;
    height: 14px;
    flex: none;
}
.tree span {
    height: 16px;
    line-height: 16px;
    padding: 0 3px 0 1px;
    background: #fff;
}
.root {
    gap: 4px;
}
.tree ul {
    list-style: none;
    margin-left: 6px;
}
.tree li {
    gap: 4px;
}
.tree li::before {
    content: "";
    width: 11px;
    height: 16px;
    margin-right: 13px;
    border-left: 1px dotted #b4b2a4;
    background: repeating-linear-gradient(90deg, #b4b2a4 0 1px, transparent 1px 2px) 0 8px / 11px 1px no-repeat;
}
.tree li:last-child::before {
    height: 9px;
    align-self: flex-start;
}

/* palettes */
.palette {
    padding: 3px 4px 0 4px;
}
.palette::before {
    content: "";
    display: block;
    height: 3px;
    margin: 0 0 7px 0;
    border-top: 1px solid #aca899;
    border-right: 1px solid #aca899;
}
.surfaces {
    width: 82px;
    flex: none;
    overflow: hidden;
    border-right: 1px solid #aca899;
}
.palette .row {
    display: flex;
    height: 43px;
}
.palette .tool {
    padding-top: 6px;
}
.palette .tool.on {
    padding-top: 5px;
}
.surfaces .row .wide {
    width: 60px;
}
.features {
    width: 82px;
    flex: none;
    overflow: hidden;
    border-right: 2px solid #8b897a;
}
.features .palette {
    border-bottom: 1px solid #aca899;
    padding-bottom: 5px;
}
.features .row .wide {
    width: 60px;
}
.palette hr {
    height: 1px;
    margin: 2px 1px 3px 2px;
    border: none;
    background: #aca899;
}

/* model view */
.viewport {
    flex: 1;
    min-width: 0;
    overflow: hidden;
    background: linear-gradient(#5cbcff, #74c4ff 32%, #8ecfff 50%, #a9dbfa 65%, #c4e5f8 78%, #d6e7f4 88%, #e6e8ec);
}
.viewport svg {
    display: block;
    width: 100%;
    height: 100%;
}
.axes {
    font: 14px "Liberation Sans", sans-serif;
}
```
